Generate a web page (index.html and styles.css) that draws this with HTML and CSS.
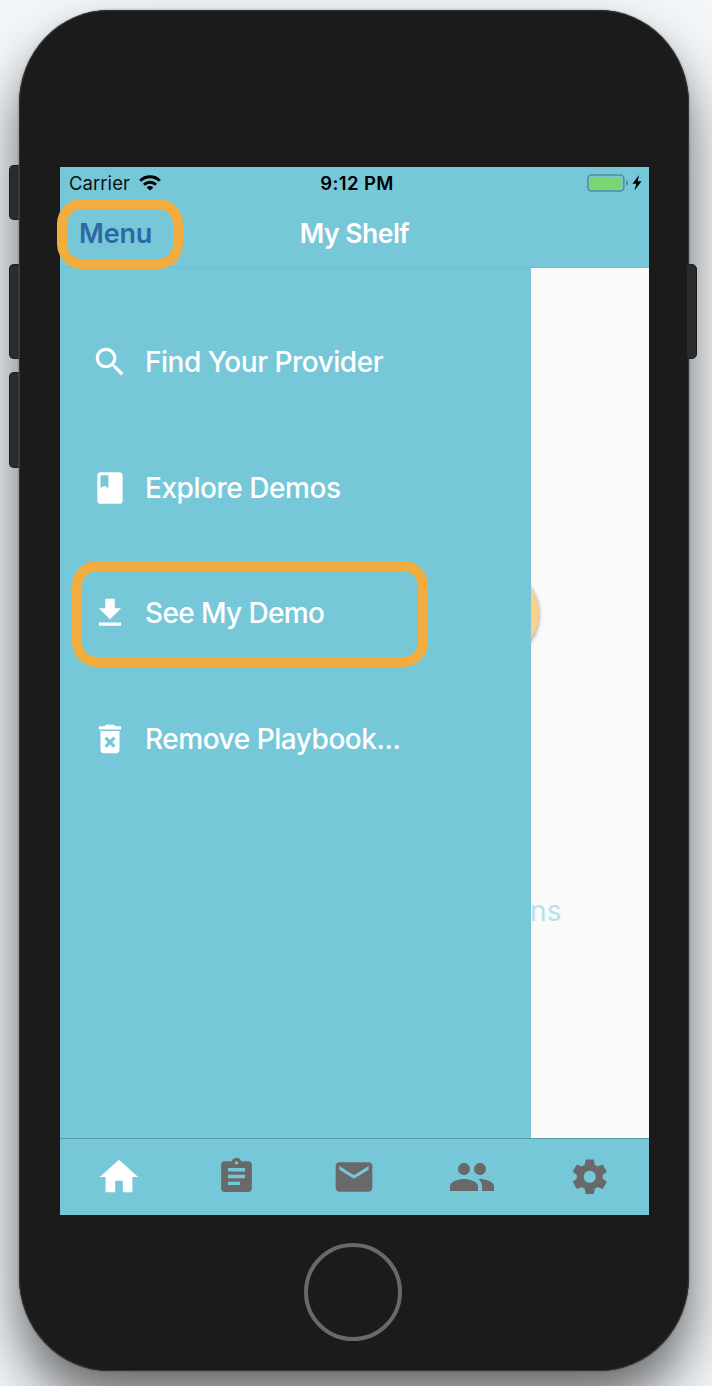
FILE: index.html
```html
<!DOCTYPE html>
<html lang="en">
<head>
<meta charset="utf-8">
<title>My Shelf</title>
<link rel="stylesheet" href="styles.css">
</head>
<body>
<div class="phone">
  <span class="key key-mute"></span>
  <span class="key key-up"></span>
  <span class="key key-down"></span>
  <span class="key key-power"></span>
  <main class="screen">
    <header class="header">
      <div class="status">
        <div class="carrier"><span class="carrier-name">Carrier</span>
          <svg class="wifi" viewBox="0 0 22 16"><g fill="none" stroke="#000" stroke-width="3"><path d="M1.2 5.7a14 14 0 0 1 19.6 0"/><path d="M5 9.7a8.6 8.6 0 0 1 12 0"/></g><path d="M11 15.600l-3.300-3.200a4.700 4.700 0 0 1 6.600 0z"/></svg>
        </div>
        <span class="time">9:12 PM</span>
        <div class="power">
          <svg class="battery" viewBox="0 0 42 18"><rect x=".9" y=".9" width="36" height="16.2" rx="3.8" fill="none" stroke="#4f8c99" stroke-width="1.5"/><rect x="3" y="3" width="31.8" height="12" rx="1.5" fill="#78d672"/><path d="M39.2 6c2.5 1 2.5 5 0 6z" fill="#4f8c99"/></svg>
          <svg class="bolt" viewBox="0 0 10 16"><path d="M7 0L.5 8.700h3.700L2.500 15.500 9.500 6.300H5.700z"/></svg>
        </div>
      </div>
      <div class="navbar">
        <a class="menu-link">Menu</a>
        <h1 class="title">My Shelf</h1>
      </div>
      <span class="ring ring-menu"></span>
    </header>
    <div class="content">
      <nav class="drawer">
        <a class="item"><svg class="item-icon" viewBox="0 0 24 24"><path d="M15.5 14h-.79l-.28-.27C15.41 12.59 16 11.11 16 9.5 16 5.91 13.09 3 9.5 3S3 5.91 3 9.5 5.91 16 9.5 16c1.61 0 3.09-.59 4.23-1.57l.27.28v.79l5 4.99L20.49 19l-4.99-5zm-6 0C7.01 14 5 11.99 5 9.5S7.01 5 9.5 5 14 7.01 14 9.5 11.99 14 9.5 14z"/></svg><span class="label-find">Find Your Provider</span></a>
        <a class="item"><svg class="item-icon" viewBox="0 0 24 24"><path d="M18 2H6c-1.1 0-2 .9-2 2v16c0 1.1.9 2 2 2h12c1.1 0 2-.9 2-2V4c0-1.1-.9-2-2-2zM6 4h5v8l-2.5-1.5L6 12V4z"/></svg><span class="label-explore">Explore Demos</span></a>
        <a class="item"><svg class="item-icon" viewBox="0 0 24 24"><path d="M19 9h-4V3H9v6H5l7 7 7-7zM5 18v2h14v-2H5z"/></svg><span class="label-see">See My Demo</span><span class="ring ring-demo"></span></a>
        <a class="item"><svg class="item-icon" viewBox="0 0 24 24"><path d="M6 19c0 1.1.9 2 2 2h8c1.1 0 2-.9 2-2V7H6v12zm2.46-7.12l1.41-1.41L12 12.59l2.12-2.12 1.41 1.41L13.41 14l2.12 2.12-1.41 1.41L12 15.41l-2.12 2.12-1.41-1.41L10.59 14l-2.13-2.12zM15.5 4l-1-1h-5l-1 1H5v2h14V4z"/></svg><span class="label-remove">Remove Playbook...</span></a>
      </nav>
      <section class="page">
        <span class="fab"></span>
        <p class="caption">ns</p>
      </section>
    </div>
    <footer class="tabs">
      <a class="tab tab-active"><svg class="icon-home" viewBox="0 0 24 24"><path d="M10 20v-6h4v6h5v-8h3L12 3 2 12h3v8z"/></svg></a>
      <a class="tab"><svg class="icon-tasks" viewBox="0 0 24 24"><path d="M19 3h-4.18C14.4 1.84 13.3 1 12 1c-1.3 0-2.4.84-2.82 2H5c-1.1 0-2 .9-2 2v14c0 1.1.9 2 2 2h14c1.1 0 2-.9 2-2V5c0-1.1-.9-2-2-2zm-7 0c.55 0 1 .45 1 1s-.45 1-1 1-1-.45-1-1 .45-1 1-1zm2 14H7v-2h7v2zm3-4H7v-2h10v2zm0-4H7V7h10v2z"/></svg></a>
      <a class="tab"><svg class="icon-mail" viewBox="0 0 24 24"><path d="M20 4H4c-1.1 0-1.99.9-1.99 2L2 18c0 1.1.9 2 2 2h16c1.1 0 2-.9 2-2V6c0-1.1-.9-2-2-2zm0 4l-8 5-8-5V6l8 5 8-5v2z"/></svg></a>
      <a class="tab"><svg class="icon-people" viewBox="0 0 24 24"><path d="M16 11c1.66 0 2.99-1.34 2.99-3S17.66 5 16 5c-1.66 0-3 1.34-3 3s1.34 3 3 3zm-8 0c1.66 0 2.99-1.34 2.99-3S9.66 5 8 5C6.34 5 5 6.34 5 8s1.34 3 3 3zm0 2c-2.33 0-7 1.17-7 3.5V19h14v-2.5c0-2.33-4.67-3.5-7-3.5zm8 0c-.29 0-.62.02-.97.05 1.16.84 1.97 1.97 1.97 3.45V19h6v-2.5c0-2.33-4.67-3.5-7-3.5z"/></svg></a>
      <a class="tab"><svg class="icon-gear" viewBox="0 0 24 24"><path d="M19.43 12.98c.04-.32.07-.64.07-.98s-.03-.66-.07-.98l2.11-1.65c.19-.15.24-.42.12-.64l-2-3.46c-.12-.22-.39-.3-.61-.22l-2.49 1c-.52-.4-1.08-.73-1.69-.98l-.38-2.65C14.46 2.18 14.25 2 14 2h-4c-.25 0-.46.18-.49.42l-.38 2.65c-.61.25-1.17.59-1.69.98l-2.49-1c-.23-.09-.49 0-.61.22l-2 3.46c-.13.22-.07.49.12.64l2.11 1.65c-.04.32-.07.65-.07.98s.03.66.07.98l-2.11 1.65c-.19.15-.24.42-.12.64l2 3.46c.12.22.39.3.61.22l2.49-1c.52.4 1.08.73 1.69.98l.38 2.65c.03.24.24.42.49.42h4c.25 0 .46-.18.49-.42l.38-2.65c.61-.25 1.17-.59 1.69-.98l2.49 1c.23.09.49 0 .61-.22l2-3.46c.12-.22.07-.49-.12-.64l-2.11-1.65zM12 15.5c-1.93 0-3.5-1.57-3.5-3.5s1.57-3.5 3.5-3.5 3.5 1.57 3.5 3.5-1.57 3.5-3.5 3.5z"/></svg></a>
    </footer>
  </main>
  <span class="home-button"></span>
</div>
</body>
</html>
```
FILE: styles.css
```css
* { box-sizing: border-box; }
body {
  margin: 0;
  height: 1386px;
  padding: 10px 0 0 19px;
  overflow: hidden;
  background: #f3f7fa;
  font-family: Inter, "Liberation Sans", sans-serif;
}
svg { display: block; flex: none; }
span, a, h1 { white-space: nowrap; }

.phone {
  position: relative;
  width: 670px;
  height: 1361px;
  padding: 157px 40px 0 41px;
  border-radius: 90px / 94px;
  background: #1b1b1b;
  box-shadow: inset 0 0 0 1px #343434, 0 0 2px rgba(0,0,0,.5), 0 34px 60px rgba(0,0,0,.52), 0 20px 30px rgba(0,0,0,.1);
}
.key {
  position: absolute;
  left: -10px;
  width: 11px;
  border: 1px solid #1c1c1c;
  border-right: 2px solid #3a3a3a;
  border-radius: 5px 0 0 5px;
  background: #2b2b2b;
}
.key-mute { top: 155px; height: 55px; }
.key-up { top: 254px; height: 95px; }
.key-down { top: 362px; height: 96px; }
.key-power {
  top: 254px;
  left: 667px;
  height: 95px;
  border: 1px solid #1c1c1c;
  border-radius: 0 5px 5px 0;
}

.screen {
  display: flex;
  flex-direction: column;
  width: 589px;
  height: 1048px;
  background: #76c8d9;
}
.header {
  position: relative;
  z-index: 2;
  height: 101px;
  border-bottom: 1px solid #86b5c0;
}
.status {
  display: grid;
  grid-template-columns: 1fr auto 1fr;
  align-items: center;
  height: 32px;
  padding: 0 7px 0 9px;
  color: #0b1112;
  font-size: 18.5px;
}
.carrier, .power { display: flex; align-items: center; }
.carrier { gap: 9px; }
.carrier-name { letter-spacing: .05px; }
.wifi { width: 22px; height: 16px; }
.time { font-weight: 600; color: #000; letter-spacing: .4px; padding-left: 3px; }
.power { justify-content: flex-end; gap: 3px; }
.battery { width: 42px; height: 18px; }
.bolt { width: 10px; height: 16px; }

.navbar {
  display: grid;
  grid-template-columns: 1fr auto 1fr;
  align-items: center;
  height: 66px;
  margin-top: 1px;
  padding: 0 19px 0 19px;
}
.menu-link { color: #2e68a4; font-size: 27px; font-weight: 600; letter-spacing: -.2px; }
.title { margin: 0; color: #fff; font-size: 26.5px; font-weight: 600; line-height: 34px; letter-spacing: -.5px; }

.ring {
  position: absolute;
  border: 10px solid #f3ac3e;
  border-radius: 25px;
}
.ring-menu { left: -3px; top: 32px; width: 126px; height: 70px; }
.ring-demo { left: 12px; top: 11px; width: 356px; height: 106px; }

.content { display: flex; flex: 1; }
.drawer {
  width: 471px;
  padding-top: 31px;
  background: #76c8d9;
}
.item {
  position: relative;
  display: flex;
  align-items: center;
  gap: 16px;
  height: 125.7px;
  padding-left: 31px;
  color: #fff;
  font-size: 28px;
  font-weight: 450;
}
.item-icon { width: 38px; height: 38px; fill: #fff; }
.label-find { letter-spacing: -.48px; }
.label-explore { letter-spacing: -.45px; }
.label-see { letter-spacing: -.62px; }
.label-remove { letter-spacing: -.46px; }

.page {
  width: 118px;
  overflow: hidden;
  background: #fafafa;
}
.fab {
  display: block;
  width: 90px;
  height: 90px;
  margin: 300px 0 0 -82px;
  border-radius: 50%;
  background: #f9d188;
  box-shadow: 0 2px 4px rgba(0,0,0,.4);
}
.caption {
  margin: 236px 0 0 -1px;
  color: #b5e2ec;
  font-size: 28px;
  line-height: 34px;
  letter-spacing: .3px;
}

.tabs {
  display: grid;
  grid-template-columns: repeat(5, 1fr);
  height: 77px;
  padding-bottom: 1px;
  border-top: 1px solid #599aa8;
}
.tab {
  display: flex;
  align-items: center;
  justify-content: center;
  fill: #696969;
}
.tab-active { fill: #fff; }
.icon-home { width: 46px; height: 46px; }
.icon-tasks { width: 41px; height: 41px; }
.icon-mail { width: 44px; height: 44px; }
.icon-people { width: 48px; height: 48px; }
.icon-gear { width: 41.5px; height: 41.5px; }

.home-button {
  display: block;
  width: 98px;
  height: 98px;
  margin: 28px 0 0 244px;
  border: 4.5px solid #696969;
  border-radius: 50%;
}
```
